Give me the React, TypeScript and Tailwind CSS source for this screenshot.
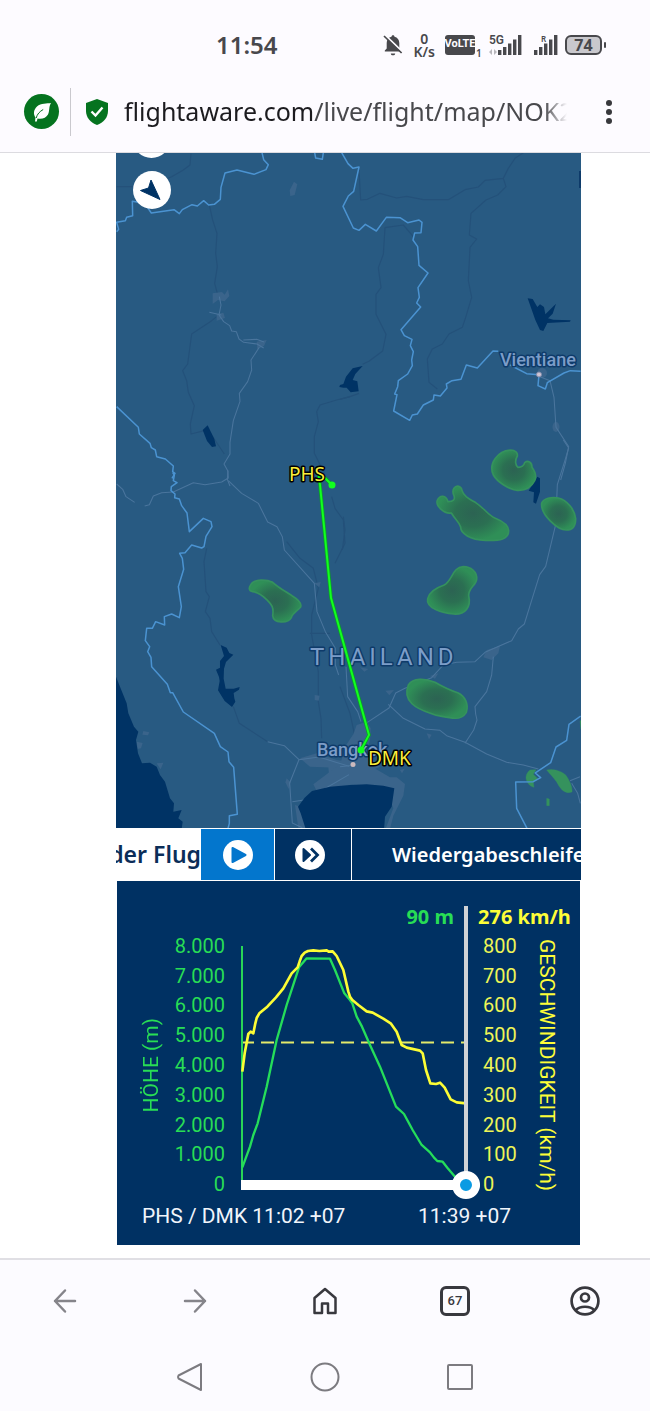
import React, { useState } from 'react';

const ALTITUDES = ['8.000', '7.000', '6.000', '5.000', '4.000', '3.000', '2.000', '1.000', '0'];
const SPEEDS = ['800', '700', '600', '500', '400', '300', '200', '100', '0'];

const SignalBars = () => (
  <svg viewBox="0 0 24 20" className="h-5 w-6" fill="#48484c">
    <rect x="0" y="15" width="3.4" height="5" />
    <rect x="5" y="12" width="3.4" height="8" />
    <rect x="10" y="8.5" width="3.4" height="11.5" />
    <rect x="15" y="4.5" width="3.4" height="15.5" />
    <rect x="20" y="0" width="3.4" height="20" />
  </svg>
);

const StatusBar = () => (
  <div className="flex h-[75px] items-center justify-between pl-[216px] pr-[44px] pt-[14px] font-['Noto_Sans',sans-serif] text-[#48484c]">
    <span className="text-2xl font-semibold">11:54</span>
    <div className="flex items-center">
      <svg viewBox="0 0 20 22" className="mr-[10px] h-[22px] w-5">
        <path d="M10 1.2c1 0 1.5.7 1.5 1.6 3 .8 4.8 3 4.8 6.2v5.4l1.9 2.2v.8H1.8v-.8l1.9-2.2V9c0-3.200 1.800-5.400 4.800-6.200 0-.9.500-1.600 1.500-1.600z" fill="#48484c" />
        <path d="M7.800 19.400h4.400c0 1.200-1 1.900-2.200 1.900s-2.200-.7-2.200-1.900z" fill="#48484c" />
        <path d="M1.900 1 20 18.500" stroke="#fdfbff" strokeWidth="2" />
        <path d="M1 2 18.600 19" stroke="#48484c" strokeWidth="1.700" />
      </svg>
      <span className="mr-[10px] flex flex-col items-center text-[14px] font-semibold leading-[13px]">
        <span>0</span>
        <span>K/s</span>
      </span>
      <span className="flex h-5 w-[30px] items-center justify-center rounded-[3px] bg-[#48484c] font-['Roboto',sans-serif] text-[11px] font-bold text-[#fdfbff]">
        VoLTE
      </span>
      <span className="mr-2 w-[6px] self-end pl-px text-[10px] font-semibold leading-[10px]">1</span>
      <span className="relative mr-3 flex w-[33px] justify-end">
        <span className="absolute left-0 top-0 font-['Roboto',sans-serif] text-[12px] font-semibold leading-[11px]">5G</span>
        <svg viewBox="0 0 8 6" className="absolute bottom-0 left-0 h-[6px] w-2" fill="#b9b8bd">
          <path d="M0 3l3-3v6zM8 3l-3 3V0z" />
        </svg>
        <SignalBars />
      </span>
      <span className="relative mr-[7px] flex">
        <span className="absolute left-[7px] top-0 text-[8px] font-semibold leading-[8px]">R</span>
        <SignalBars />
      </span>
      <span className="flex h-5 w-[37px] items-center justify-center rounded-md border-2 border-[#48484c] bg-[#c9c8cd] text-base font-bold leading-4">
        74
      </span>
      <span className="ml-[2px] h-[6px] w-[2px] rounded-sm bg-[#48484c]" />
    </div>
  </div>
);

const AddressBar = () => (
  <header className="flex h-[78px] items-center border-b border-[#dcdbe0] pl-6 pr-[32px] pb-1">
    <button aria-label="Eco" className="flex size-[35px] shrink-0 items-center justify-center rounded-full bg-[#05731f]">
      <svg viewBox="0 0 20 20" className="size-5">
        <path d="M19 1C15 1.500 9 1 5 4.500 1.500 8 1 12 3.500 15.500L3 19.500h1.800l.7-3c4.500 1 8.500-.5 10.500-4C17.800 9.500 16.500 5 19 1z" fill="#fff" />
        <path d="M4.200 16c1-4 3.500-6.500 7-8.500" fill="none" stroke="#05731f" strokeWidth="1" />
      </svg>
    </button>
    <span className="mx-[11px] h-12 w-px shrink-0 bg-[#cac9ce]" />
    <svg viewBox="0 0 22 26" className="ml-1 mr-4 h-[26px] w-[22px] shrink-0">
      <path d="M11 0 22 4v8c0 6.500-4.500 11.500-11 14C4.500 23.500 0 18.500 0 12V4z" fill="#05731f" />
      <path d="M5.500 12.500 9.500 16.500 16.500 8.500" fill="none" stroke="#fff" strokeWidth="2.400" />
    </svg>
    <button className="min-w-0 flex-1 overflow-hidden whitespace-nowrap text-left font-['Noto_Sans',sans-serif] text-[25px] text-[#48484c] [mask-image:linear-gradient(to_right,black_93%,transparent_98%)]">
      <span className="text-[#1c1b1f]">flightaware.com</span>/live/flight/map/NOK2
    </button>
    <button aria-label="Menu" className="ml-6 flex w-[18px] shrink-0 flex-col items-center gap-[3px]">
      <span className="size-[6px] rounded-full bg-[#38383c]" />
      <span className="size-[6px] rounded-full bg-[#38383c]" />
      <span className="size-[6px] rounded-full bg-[#38383c]" />
    </button>
  </header>
);

const RouteMap = () => (
  <svg viewBox="116 153 465 675" className="block h-auto w-full" role="img" aria-label="Flugroute PHS nach DMK">
    <defs>
      <radialGradient id="rain">
        <stop offset="0" stopColor="#2c6353" />
        <stop offset="0.500" stopColor="#2b6f52" />
        <stop offset="1" stopColor="#2f8f57" />
      </radialGradient>
    </defs>
    <rect x="116" y="153" width="465" height="675" fill="#285a82" />

    {/* faint province roads */}
    <g fill="none" stroke="#24517a" strokeWidth="3.500" strokeLinejoin="round">
      <path transform="translate(110 150) scale(.33333)" d="M20 110h45l60-5 60-25 35-20 20-15 3-34M298 165l10 45 13 40-4 60 5 40-8 50 8 30M320 500l-15 12-60 40-12 90-15 20 12 30 5 35 18 40-12 55 2 30 40-10 20 10 40 60M720 740l-40 10-50 15-10 20 5 30-12 45v50l30 60" />
      <path transform="translate(340 150) scale(.33333)" d="M57 60l5 90 20-2 38-18 50 14 30-5 50 10h75l50-30 40-8 20-20 55-6 15-30 20-30 30-20M490 85l8 25-25 25-35 15-45 40-5 65 22 12-20 25-5 100 10 50-18 60-10 30-40 20-20 30-30 15-15 30 5 70 25 20M220 260l-30-35-55 8-5 80-15 40 8 60-15 20v60l30 60-10 50-40 30-20 10M0 748l30-8 27-10" />
      <path transform="translate(110 470) scale(.33333)" d="M290 235l-8 40 6 90 10 15-12 45 14 20 5 40 25 40M370 710l18 50 85 55M530 215l40 50 40 30 15 60-20 80v60l20 110v90l8 50 2 60M600 490h60M665 80l10 35 25 35 5 70-30 60" />
      <path transform="translate(340 440) scale(.33333)" d="M10 230l5 40-8 60M0 740l30 80 15 70" />
    </g>

    {/* built-up areas */}
    <g fill="#3a648b">
      <path transform="translate(110 150) scale(.33333)" d="M552 95l10 8-8 32-13 3-2-17zM308 430l28-4 8 8 10-16 4 20-14 16-20-4-16 12zM320 492l20-4 5 16-25 8zM440 575l30-5-8 18-20 10z" />
      <path transform="translate(110 470) scale(.33333)" d="M100 783l18 4-4 9-17-2zM80 815l18 4-5 16-10 2zM140 880l20-2-8 20zM612 340l20-4-4 16zM614 675l15 2-3 15-12-2zM530 925l12 12-6 20-10-20zM570 865l50-15 60 20 40 5v20l-120-5zM655 890l65-5v75l-60-5zM555 1005l30 10 30 60h-50z" />
      <path transform="translate(340 440) scale(.33333)" d="M50 855l30-10 12 20-2 35-10 40 40 40-14 6 44 26 20 0 25 20-5 35-30 60-10 40-20 18 30-80-20-55-40-12-90-5-80 20-10-20 80-60 20-60 20-30zM440 630l40-12-5 22-20 20-25-8zM270 708l25-8-10 16zM136 752l26-2-14 16zM260 880l15 4-8 14zM180 990l14-4-8 14zM60 682l25 5-12 8z" />
      <ellipse cx="556" cy="427" rx="3.500" ry="5" />
      <ellipse cx="542" cy="373" rx="5" ry="5" />
    </g>

    {/* main roads */}
    <g fill="none" stroke="#4a759d" strokeWidth="3.200" strokeLinejoin="round">
      <path transform="translate(110 150) scale(.33333)" d="M298 487l36 8M328 440l5 25-6 30 14 20 18 12 6 16 14 2 8 22 14 10 40 5 20 12M400 570l40-2 22 8M448 592l-25 38 2 30-12 35-25 35 2 24-20 58-10 65v35l-18 30 12 22-2 24 8 20" />
      <path transform="translate(110 470) scale(.33333)" d="M104 108l14-4 12-26 25-10 35-2 60-28 35 6 50-8 20-12-2-24M355 32l40 38 50 30 28 56 28 14 16 30 6 40 90 100 8 85 25 60 30 50v50l10 30M20 42l18 16 10 22 26 17M473 815l50 12 44 42 60-8 90 28M567 869l-28 70 8 120 30 14M547 995l40-6 70-40 60-35M125 1040l10 35" />
      <path transform="translate(340 440) scale(.33333)" d="M670 0l16 24-12 40-22 70-5 120-30 125-18 25-28 90-18 58-18 15-20 35-80 35-30 28-55 2-40 8-35 38-80 32-28 14-20 45-75 50M145 793l45 42 65 32 45 4 20 16 55 20 65 35 60 25 50 8 45 12M460 650l-5 55-15 50-35 45 2 22 4 18-10 30-26 40M18 680l5 90 30 45 10 30M0 980l40-4M690 1022l30-12M695 1030l18 30 8 30" />
      <path transform="translate(340 150) scale(.33333)" d="M600 680l30 12 12 50 6 90 38 58-10 50-14 50" />
    </g>

    {/* water */}
    <g fill="#003365">
      <path transform="translate(110 470) scale(.33333)" d="M18 620l12 30 20 50 5 30 17 40 13 15-7 25 6 40 12 30 24-2 20 12 10 25 15 20 15 50 12 15-2 25 25-5-10 25 13 10-3 22H18z" />
      <path transform="translate(340 440) scale(.33333)" d="M-102 1170l-16-50-8-20 20-27 22-20 54-13 60-5 50-2 50 4 33 8-8 55-20 30-3 40z" />
      <path transform="translate(110 150) scale(.33333)" d="M278 840l15-14 8 16 12 25 5 22-12 2-15-18z" />
      <path transform="translate(110 470) scale(.33333)" d="M332 525l18 8 8 16 12 5-22 22-6 20-1 30 6 30 24 0 18-5-2 8-16 10 2 16 3 10-10 16-22-18-20-32 5-28-2-12-9-22 12-6 0-20 12-15z" />
      <path transform="translate(340 150) scale(.33333)" d="M0 705l10-3 8-22 20-25 30-7-22 24-8 18 14 4 4 30-24 3-12-14-10 0-12-2zM563 445l15 2 14 24 8-8 12 8 4 22 32-32-10 30-14 14 16 4 52 2-2 4-68 4-12 24-10-3-14-30z" />
      <path transform="translate(340 440) scale(.33333)" d="M592 110l8 5v40l-12 36-8-4 2-30-16-5z" />
    </g>

    {/* rain cells */}
    <g fill="url(#rain)" stroke="#35925d" strokeWidth="5" strokeLinejoin="round">
      <path transform="translate(340 440) scale(.33333)" d="M512 30c14 0 22 8 20 18-8 14-6 28 2 34 14 0 18-6 20-14 10-8 22-2 22 14 10 14 14 28 8 40-10 20-30 30-52 29-25-2-60-25-72-46-16-35 14-73 52-75z" />
      <path transform="translate(340 440) scale(.33333)" d="M342 145c8-12 22-6 24 6 4 16 18 24 40 36 30 20 35 36 60 48 25 10 40 22 40 38 0 24-25 30-70 28-45-2-75-20-74-40-4-15-16-22-28-42-22 4-48-22-42-38 8-18 26-16 32 4 16 0 22-6 18-18-4-8-4-16 0-22z" />
      <path transform="translate(340 440) scale(.33333)" d="M605 190c5-15 30-20 50-16 26 6 50 36 52 62 0 24-10 34-28 34-25 0-78-45-74-80z" />
      <path transform="translate(340 440) scale(.33333)" d="M370 380c22 0 42 15 40 38-2 18-24 25-24 48 8 36-10 58-45 56-34-2-84-18-78-46 6-24 30-34 48-40 28-14 24-54 59-56z" />
      <path transform="translate(340 440) scale(.33333)" d="M205 735c14-22 50-20 80-8 24 14 44 24 70 32 20 10 32 34 24 58-12 20-30 20-50 16-30-6-38-4-60-14-36-12-84-34-64-84z" />
      <path transform="translate(110 470) scale(.33333)" d="M422 345c10-20 50-16 66-8 20 18 40 28 58 40 20 12 30 22 26 34-10 12-26 20-28 32-10 18-54 18-56-6 4-24-2-32-18-48-14-14-26-22-42-24-12-2-12-12-6-20z" />
      <path transform="translate(340 440) scale(.33333)" fill="#35925d" strokeWidth="1" d="M570 990l18-1-8 14 14 14-14 10 2 15c-20-5-36-32-12-52zM620 990c24-6 48 6 58 16 12 18 20 36 18 50-22 8-36-10-46-30-10-14-20-24-30-36zM620 1075l8 2v20h-8zM720 842l3 0v26z" />
    </g>

    {/* national borders */}
    <g fill="none" stroke="#4b93d1" strokeWidth="4.500" strokeLinejoin="round">
      <path transform="translate(110 150) scale(.33333)" d="M20 245L26 238 20 217 46 212 50 202 68 197 67 154 104 160 124 189 192 179 208 191 217 179 246 164 262 168 281 152 296 165 313 163 331 148 333 112 345 69 381 60 432 73 468 59 475 44 461 29 456 8M614 8L617 24 637 28 640 8M20 770L85 832 88 852 120 880 124 893 136 900 140 920 166 927 190 948 188 965 195 970 186 985" />
      <path transform="translate(340 150) scale(.33333)" d="M5 8L24 41 39 55 57 51 41 124 25 138 9 169 40 234 57 241 76 223 109 243 139 202 180 203 203 218 237 210 246 217 243 248 224 249 219 270 233 290 237 346 264 369 234 413 238 442 230 459 242 471 183 539 193 557 216 568 211 587 220 605 215 630 217 647 203 672 175 692 173 710 164 732 171 734 161 783 209 811 217 795 232 792 250 765 280 750 282 735 301 738 321 714 319 702 336 692 363 688 379 645 412 654 459 603 475 604M510 645L560 671 597 674 594 707 616 717 622 698 672 669 691 662 722 664" />
      <path transform="translate(110 470) scale(.33333)" d="M188 8L193 15 190 32 201 38 184 50 183 62 195 72 194 83 208 87 215 107 231 129 238 185 280 145 303 155 306 170 288 199 282 230 275 234 245 225 225 248 209 250 217 265 221 298 205 350 214 410 208 443 185 432 163 440 164 465 137 455 127 475 110 475 106 512 119 530 113 545 123 562 125 590 172 643 181 668 188 668 220 726 313 790 331 830 354 846 357 875 371 892 382 1033 358 1037 358 1060 354 1075" />
      <path transform="translate(340 440) scale(.33333)" d="M722 828L687 853 680 901 648 921 632 968 586 999 602 1013 580 1025 527 1026 530 1105 562 1167" />
    </g>

    {/* place names */}
    <g className="font-['Roboto',sans-serif]" fill="#7c9dc8" stroke="#0e3b6a" strokeWidth="3" strokeLinejoin="round" paintOrder="stroke">
      <text x="500" y="366" fontSize="18" fontWeight="500">Vientiane</text>
      <text x="317" y="756" fontSize="18" fontWeight="500">Bangkok</text>
      <text x="310" y="665" fontSize="24" className="tracking-[4px]">THAILAND</text>
    </g>
    <path d="M583 172H580V187H583" fill="none" stroke="#0e3b6a" strokeWidth="2" />
    <circle cx="539" cy="374.500" r="2.500" fill="#cfc3d2" stroke="#7f8cab" />
    <circle cx="353" cy="764.500" r="2.500" fill="#cbb9bd" />

    {/* flight track */}
    <path d="M332 485L325 478 319 477 320 485 331 598 369 735 361 750" fill="none" stroke="#0b9e28" strokeWidth="3.500" />
    <path d="M332 485L325 478 319 477 320 485 331 598 369 735 361 750" fill="none" stroke="#12ff1f" strokeWidth="2" />
    <circle cx="332" cy="485" r="3.500" fill="#12ff1f" />
    <circle cx="361" cy="750" r="3.500" fill="#12ff1f" />
    <g className="font-['Noto_Sans',sans-serif]" fontSize="19" fill="#fbee3c" stroke="#000" strokeWidth="3" strokeLinejoin="round" paintOrder="stroke">
      <text x="289" y="481">PHS</text>
      <text x="368" y="765">DMK</text>
    </g>

    {/* map controls */}
    <circle cx="151.500" cy="139" r="19" fill="#fff" />
    <circle cx="152" cy="190" r="19" fill="#fff" />
    <path d="M151 180L160 199.500 140.500 190.500 148.500 188z" fill="#003365" stroke="#003365" strokeLinejoin="round" />
  </svg>
);

const PlaybackBar = () => (
  <div className="flex h-[53px] border-y border-white bg-[#003163] font-['Noto_Sans',sans-serif] font-semibold text-white">
    <button className="flex w-[85px] shrink-0 items-center justify-end overflow-hidden whitespace-nowrap bg-white text-[23px] text-[#0b2d58]">
      <span>der Flug</span>
    </button>
    <button aria-label="Abspielen" className="flex w-[74px] shrink-0 items-center justify-center border-r border-white bg-[#0376cd]">
      <svg viewBox="0 0 30 30" className="size-[30px]">
        <circle cx="15" cy="15" r="15" fill="#fff" />
        <path d="M9.500 8 22.500 15 9.500 22z" fill="#0376cd" stroke="#0376cd" strokeWidth="2" strokeLinejoin="round" />
      </svg>
    </button>
    <button aria-label="Schneller" className="flex w-[77px] shrink-0 items-center justify-center border-r border-white pr-[6px]">
      <svg viewBox="0 0 30 30" className="size-[30px]">
        <circle cx="15" cy="15" r="15" fill="#fff" />
        <path d="M8.500 9 15 15 8.500 21z" fill="#003163" stroke="#003163" strokeWidth="2" strokeLinejoin="round" />
        <path d="M16 8.500 22.500 15 16 21.500" fill="none" stroke="#003163" strokeWidth="2.800" />
      </svg>
    </button>
    <button className="min-w-0 flex-1 overflow-hidden whitespace-nowrap pl-10 text-left text-xl">Wiedergabeschleife</button>
  </div>
);

const ProfileChart = () => {
  const [position, setPosition] = useState(100);

  return (
    <section className="mx-px bg-[#003163] pb-[15px] pl-[22px] pr-[21px] pt-[25px] font-['Roboto',sans-serif] text-[21px] leading-6">
      <div className="grid grid-cols-[24px_78px_1fr_55px_24px] grid-rows-[25px_268px]">
        <svg viewBox="0 0 239 293" preserveAspectRatio="none" className="col-start-3 row-span-2 row-start-1 h-full w-full" fill="none" strokeWidth="2.500" strokeLinejoin="round">
          <path d="M0 136.500h225" stroke="#e3ea6a" strokeWidth="2" strokeDasharray="13 7" />
          <path d="M1 40V275" stroke="#29d657" strokeWidth="2" />
          <path
            transform="translate(-131 -16) scale(.33333)"
            d="M397 832L420 770 430 735 443 700 470 590 500 450 530 345 567 232 590 205 660 206 675 240 703 310 720 330 727 340 740 380 756 410 780 465 810 530 858 650 882 672 908 720 935 765 960 787 972 803 982 813 998 815 1012 833 1035 860 1060 870"
            stroke="#25dd5a"
            strokeWidth="7"
          />
          <path
            transform="translate(-131 -16) scale(.33333)"
            d="M397 545L404 490 415 432 422 425 430 430 436 400 440 384 448 370 472 350 498 322 520 295 545 250 563 232 569 214 575 198 584 188 594 183 610 181 628 183 650 181 656 185 668 184 680 198 700 240 715 305 720 320 727 330 745 345 770 364 788 368 820 386 842 400 860 425 868 446 875 465 890 473 930 482 938 490 948 540 961 580 978 582 990 578 1004 593 1022 628 1040 637 1068 640"
            stroke="#fcfd35"
            strokeWidth="8"
          />
          <path d="M225 0V270" stroke="#d0d2d5" strokeWidth="4" />
        </svg>
        <strong className="col-start-3 row-start-1 pr-[26px] text-right font-['Noto_Sans',sans-serif] text-xl leading-[22px] text-[#28dd55]">90 m</strong>
        <strong className="col-span-2 col-start-4 row-start-1 -ml-[2px] whitespace-nowrap font-['Noto_Sans',sans-serif] text-xl leading-[22px] text-[#fdfd38]">276 km/h</strong>
        <div className="col-start-1 row-start-2 flex items-center justify-center">
          <span className="rotate-180 whitespace-nowrap text-[#28dd55] [writing-mode:vertical-rl]">HÖHE (m)</span>
        </div>
        <ul className="col-start-2 row-start-2 flex flex-col pr-4 text-right text-xl text-[#28dd55]">
          {ALTITUDES.map((value) => (
            <li key={value} className="flex flex-1 items-center justify-end">{value}</li>
          ))}
        </ul>
        <input
          type="range"
          aria-label="Zeitpunkt"
          min={0}
          max={100}
          value={position}
          onChange={(e) => setPosition(Number(e.target.value))}
          className="col-start-3 row-start-2 h-7 w-full cursor-pointer appearance-none self-end bg-transparent [&::-webkit-slider-runnable-track]:h-[10px] [&::-webkit-slider-runnable-track]:rounded-r-full [&::-webkit-slider-runnable-track]:bg-white [&::-webkit-slider-thumb]:-mt-[9px] [&::-webkit-slider-thumb]:size-7 [&::-webkit-slider-thumb]:appearance-none [&::-webkit-slider-thumb]:rounded-full [&::-webkit-slider-thumb]:border-8 [&::-webkit-slider-thumb]:border-solid [&::-webkit-slider-thumb]:border-white [&::-webkit-slider-thumb]:bg-[#0a9be3]"
        />
        <ul className="col-start-4 row-start-2 flex flex-col pl-[3px] text-xl text-[#eef556]">
          {SPEEDS.map((value) => (
            <li key={value} className="flex flex-1 items-center">{value}</li>
          ))}
        </ul>
        <div className="col-start-5 row-start-2 flex items-center justify-center">
          <span className="whitespace-nowrap text-[#fdfd38] [writing-mode:vertical-rl]">GESCHWINDIGKEIT (km/h)</span>
        </div>
      </div>
      <div className="flex justify-between pl-[3px] pr-12 pt-1 text-[#f0f5fb] leading-[27px]">
        <span>PHS / DMK 11:02 +07</span>
        <span>11:39 +07</span>
      </div>
    </section>
  );
};

const BrowserToolbar = () => (
  <nav className="grid h-[82px] grid-cols-5 place-items-center">
    <button aria-label="Zurück">
      <svg viewBox="0 0 24 28" className="h-7 w-6" fill="none" stroke="#85848a" strokeWidth="2.500" strokeLinecap="round" strokeLinejoin="round">
        <path d="M22 14H2M12 3.500 2 14l10 10.500" />
      </svg>
    </button>
    <button aria-label="Vorwärts">
      <svg viewBox="0 0 24 28" className="h-7 w-6" fill="none" stroke="#85848a" strokeWidth="2.500" strokeLinecap="round" strokeLinejoin="round">
        <path d="M2 14h20M12 3.500 22 14 12 24.500" />
      </svg>
    </button>
    <button aria-label="Startseite">
      <svg viewBox="0 0 24 28" className="h-7 w-6" fill="none" stroke="#38383e" strokeWidth="2.500" strokeLinejoin="round">
        <path d="M1.500 11 12 2l10.500 9v15H15v-9.500H9V26H1.500z" />
      </svg>
    </button>
    <button aria-label="67 Tabs" className="flex h-[30px] w-[30px] items-center justify-center rounded-md border-[3px] border-[#38383e] font-['Roboto',sans-serif] text-[13px] font-medium text-[#38383e]">
      67
    </button>
    <button aria-label="Profil">
      <svg viewBox="0 0 30 30" className="size-[30px]" fill="none" stroke="#38383e" strokeWidth="2.700">
        <circle cx="15" cy="15" r="13.400" />
        <circle cx="15" cy="11.500" r="4" />
        <path d="M5.500 24.500C10 19.500 20 19.500 24.500 24.500" />
      </svg>
    </button>
  </nav>
);

const SystemNav = () => (
  <nav className="flex h-[69px] items-center justify-center gap-[105px]">
    <button aria-label="Zurück (System)">
      <svg viewBox="0 0 30 30" className="size-[30px]" fill="none" stroke="#7c7b80" strokeWidth="2" strokeLinejoin="round">
        <path d="M26 2v26L3.500 16.500q-1-1.500 0-3z" />
      </svg>
    </button>
    <button aria-label="Home">
      <svg viewBox="0 0 30 30" className="size-[30px]" fill="none" stroke="#7c7b80" strokeWidth="2">
        <circle cx="15" cy="15" r="13.500" />
      </svg>
    </button>
    <button aria-label="Übersicht">
      <svg viewBox="0 0 30 30" className="size-[30px]" fill="none" stroke="#7c7b80" strokeWidth="2" strokeLinejoin="round">
        <rect x="3" y="3" width="24" height="24" rx="1" />
      </svg>
    </button>
  </nav>
);

export default function App() {
  return (
    <div className="min-h-screen bg-[#fdfbff]">
      <StatusBar />
      <AddressBar />
      <main className="bg-white pb-[13px] pl-[116px] pr-[69px]">
        <RouteMap />
        <PlaybackBar />
        <ProfileChart />
      </main>
      <footer className="border-t-2 border-[#e0dfe4] bg-[#fcfbff]">
        <BrowserToolbar />
        <SystemNav />
      </footer>
    </div>
  );
}
